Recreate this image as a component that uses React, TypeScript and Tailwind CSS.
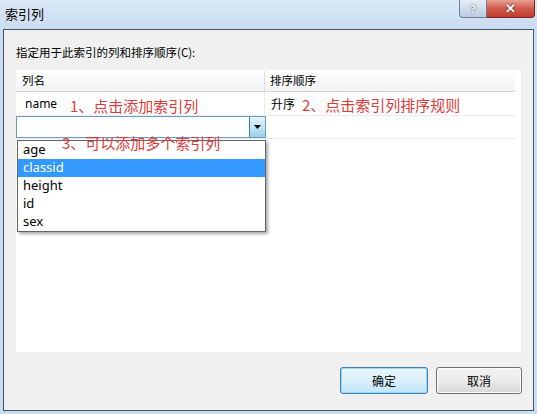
const cjk = { fontFamily: '"Noto Sans CJK SC", "Noto Sans", sans-serif' };
const ui = { fontFamily: '"Noto Sans", "Noto Sans CJK SC", sans-serif' };

const items = ["age", "classid", "height", "id", "sex"];

function TitleBar() {
  return (
    <div className="flex h-[29px] items-start justify-between bg-gradient-to-b from-[#dce9f7] to-[#cadcf0]">
      <span className="pl-[5px] pt-[6px] text-[13px] leading-[16px] text-black" style={cjk}>
        索引列
      </span>
      <div className="mr-[2px] flex">
        <div className="flex h-[18px] w-[28px] items-center justify-center rounded-bl-[4px] border border-t-0 border-[#6d7f96] bg-gradient-to-b from-[#e4ecf6] to-[#bccde2] text-[11px] font-bold leading-none text-white [text-shadow:0_0_2px_#333]" style={ui}>
          ?
        </div>
        <div className="flex h-[18px] w-[48px] items-center justify-center rounded-br-[4px] border border-l-0 border-t-0 border-[#7a2a24] bg-gradient-to-b from-[#e8a093] via-[#cf5a48] to-[#c33c2c] text-[13px] font-bold leading-none text-white [text-shadow:0_0_2px_#400]" style={ui}>
          ✕
        </div>
      </div>
    </div>
  );
}

function Grid() {
  return (
    <div className="relative mt-[10px] h-[282px] w-[505px] bg-white pt-[1px]">
      <div className="flex h-[21px] w-[499px] border-b border-[#d5d5d5] bg-gradient-to-b from-white to-[#f2f3f5] text-[11.5px] text-black" style={cjk}>
        <div className="flex w-[249px] items-center border-r border-[#dedede] pl-[6px]">列名</div>
        <div className="flex flex-1 items-center pl-[5px]">排序顺序</div>
      </div>
      <div className="flex h-[24px] w-[499px] border-b border-[#ececec]">
        <div className="flex w-[249px] items-center border-r border-[#ececec] pl-[9px] text-[12px] text-black" style={ui}>
          name
        </div>
        <div className="flex flex-1 items-center pl-[6px] text-[12px] text-black" style={cjk}>
          升序
        </div>
      </div>
      <div className="flex h-[23px] w-[499px] border-b border-[#ececec]">
        <div className="flex w-[250px] items-stretch border border-[#6a9cc6] bg-white">
          <div className="flex-1" />
          <div className="flex w-[16px] items-center justify-center border-l border-[#3c7fb1] bg-gradient-to-b from-[#e5f4fc] via-[#c4e5f6] to-[#98d1ef]">
            <svg width="7" height="4" viewBox="0 0 7 4">
              <path d="M0 0h7L3.5 4z" fill="#000" />
            </svg>
          </div>
        </div>
        <div className="flex-1" />
      </div>

      <div className="absolute left-[1px] top-[70px] w-[249px] border border-[#646464] bg-white shadow-[2px_2px_3px_rgba(0,0,0,0.35)]">
        {items.map((it) => (
          <div
            key={it}
            className={
              it === "classid"
                ? "flex h-[18px] items-center bg-[#3399ff] pl-[5px] text-[13px] text-white"
                : "flex h-[18px] items-center pl-[5px] text-[13px] text-black"
            }
            style={ui}
          >
            {it}
          </div>
        ))}
      </div>

      <span className="absolute left-[54px] top-[27px] text-[15px] leading-[18px] text-[#dc3b3b]" style={cjk}>
        1、点击添加索引列
      </span>
      <span className="absolute left-[286px] top-[26px] text-[15px] leading-[18px] text-[#dc3b3b]" style={cjk}>
        2、点击索引列排序规则
      </span>
      <span className="absolute left-[46px] top-[64px] text-[15px] leading-[18px] text-[#dc3b3b]" style={cjk}>
        3、可以添加多个索引列
      </span>
    </div>
  );
}

export default function App() {
  return (
    <div className="flex h-[414px] w-[537px] flex-col overflow-hidden bg-[#c9dcf0]">
      <TitleBar />
      <div className="mx-[3px] flex h-[382px] flex-col border border-[#44556b] bg-[#f0f0f0] pl-[12px]">
        <div className="mt-[14px] text-[11.5px] leading-[16px] text-black" style={cjk}>
          指定用于此索引的列和排序顺序(C):
        </div>
        <Grid />
        <div className="mt-[15px] flex justify-end gap-[8px] pr-[11px]">
          <button className="h-[27px] w-[88px] rounded-[3px] border border-[#3c7fb1] bg-gradient-to-b from-[#eaf6fd] via-[#d9f0fc] to-[#bee6fd] text-[12px] text-black shadow-[inset_0_0_0_1px_#9fd8f5]" style={cjk}>
            确定
          </button>
          <button className="h-[27px] w-[86px] rounded-[3px] border border-[#707070] bg-gradient-to-b from-[#f2f2f2] via-[#ebebeb] to-[#d7d7d7] text-[12px] text-black shadow-[inset_0_0_0_1px_#fcfcfc]" style={cjk}>
            取消
          </button>
        </div>
      </div>
    </div>
  );
}
